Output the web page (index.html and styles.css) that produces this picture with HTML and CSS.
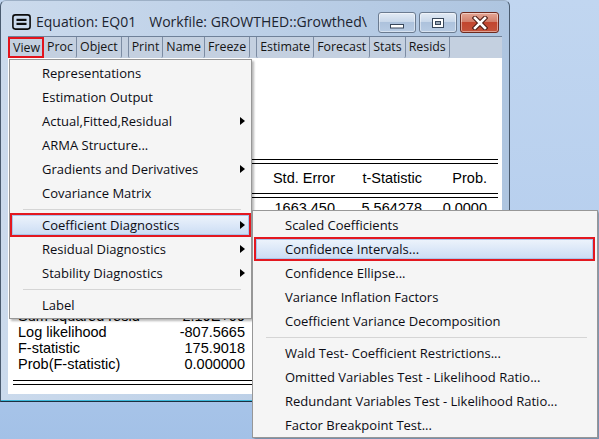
FILE: index.html
```html
<!DOCTYPE html>
<html>
<head>
<meta charset="utf-8">
<link rel="stylesheet" href="styles.css">
</head>
<body>
<div class="window">
  <div class="titlebar">
    <svg class="sysicon" width="19" height="16" viewBox="0 0 19 16">
      <rect x="0.9" y="0.9" width="17.2" height="14.2" rx="2.5" fill="none" stroke="#0d0d0d" stroke-width="1.6"/>
      <rect x="4.5" y="4.8" width="10" height="2.2" fill="#0d0d0d"/>
      <rect x="4.5" y="8.8" width="10" height="2.2" fill="#0d0d0d"/>
    </svg>
    <span class="title">Equation: EQ01</span>
    <span class="title wf">Workfile: GROWTHED::Growthed\</span>
    <div class="caption">
      <div class="cbtn">
        <svg width="16" height="6" viewBox="0 0 16 6"><rect x="1.5" y="1.5" width="13" height="3.5" fill="#fff" stroke="#38475a" stroke-width="1"/></svg>
      </div>
      <div class="cbtn">
        <svg width="14" height="12" viewBox="0 0 14 12"><rect x="1.5" y="1.5" width="11" height="9" fill="#fff" stroke="#38475a" stroke-width="1"/><rect x="4.5" y="4.5" width="5" height="3" fill="#9aa8b8" stroke="#38475a" stroke-width="1"/></svg>
      </div>
      <div class="cbtn close">
        <svg width="16" height="14" viewBox="0 0 16 14"><path d="M3 2 L13 12 M13 2 L3 12" stroke="#4a1a12" stroke-width="4.6" stroke-linecap="square"/><path d="M3 2 L13 12 M13 2 L3 12" stroke="#fff" stroke-width="2.6" stroke-linecap="square"/></svg>
      </div>
    </div>
  </div>
  <div class="toolbar">
    <div class="tgroup">
      <span class="tbtn sel">View</span><span class="tbtn">Proc</span><span class="tbtn">Object</span>
    </div>
    <div class="tgroup">
      <span class="tbtn">Print</span><span class="tbtn">Name</span><span class="tbtn">Freeze</span>
    </div>
    <div class="tgroup">
      <span class="tbtn">Estimate</span><span class="tbtn">Forecast</span><span class="tbtn">Stats</span><span class="tbtn">Resids</span>
    </div>
  </div>
  <div class="content">
    <div class="head">
      <div>Dependent Variable: Y</div>
      <div>Method: Least Squares</div>
      <div>Date: 06/12/14 &nbsp; Time: 10:45</div>
      <div>Sample: 1 50</div>
      <div>Included observations: 50</div>
    </div>
    <div class="dline"></div>
    <div class="coef hdr">
      <span class="l">Variable</span><span>Coefficient</span><span>Std. Error</span><span>t-Statistic</span><span>Prob.</span>
    </div>
    <div class="dline gap"></div>
    <div class="coef rows">
      <span class="l">C</span><span>9256.145</span><span>1663.450</span><span>5.564278</span><span>0.0000</span>
      <span class="l">X</span><span>1.782306</span><span>0.134380</span><span>13.26288</span><span>0.0000</span>
    </div>
    <div class="dline mid"></div>
    <div class="stats">
      <span>R-squared</span><span class="v">0.785606</span><span>Mean dependent var</span><span class="v">29456.02</span>
      <span>Adjusted R-squared</span><span class="v">0.781140</span><span>S.D. dependent var</span><span class="v">14463.48</span>
      <span>S.E. of regression</span><span class="v">6758.112</span><span>Akaike info criterion</span><span class="v">20.38266</span>
      <span>Sum squared resid</span><span class="v">2.19E+09</span><span>Schwarz criterion</span><span class="v">20.45914</span>
      <span>Log likelihood</span><span class="v">-807.5665</span><span>Hannan-Quinn criter.</span><span class="v">20.41135</span>
      <span>F-statistic</span><span class="v">175.9018</span><span>Durbin-Watson stat</span><span class="v">0.341273</span>
      <span>Prob(F-statistic)</span><span class="v">0.000000</span><span></span><span></span>
    </div>
    <div class="dline end"></div>
  </div>
</div>

<div class="menu main">
  <div class="item">Representations</div>
  <div class="item">Estimation Output</div>
  <div class="item">Actual,Fitted,Residual<span class="arrow"></span></div>
  <div class="item">ARMA Structure...</div>
  <div class="item">Gradients and Derivatives<span class="arrow"></span></div>
  <div class="item">Covariance Matrix</div>
  <div class="sep"></div>
  <div class="item hl">Coefficient Diagnostics<span class="arrow"></span></div>
  <div class="item">Residual Diagnostics<span class="arrow"></span></div>
  <div class="item">Stability Diagnostics<span class="arrow"></span></div>
  <div class="sep"></div>
  <div class="item">Label</div>
</div>

<div class="menu sub">
  <div class="item">Scaled Coefficients</div>
  <div class="item hl">Confidence Intervals...</div>
  <div class="item">Confidence Ellipse...</div>
  <div class="item">Variance Inflation Factors</div>
  <div class="item">Coefficient Variance Decomposition</div>
  <div class="sep"></div>
  <div class="item">Wald Test- Coefficient Restrictions...</div>
  <div class="item">Omitted Variables Test - Likelihood Ratio...</div>
  <div class="item">Redundant Variables Test - Likelihood Ratio...</div>
  <div class="item">Factor Breakpoint Test...</div>
</div>
</body>
</html>
```
FILE: styles.css
```css
* { box-sizing: border-box; }
html, body { margin: 0; padding: 0; }
body {
  width: 599px;
  height: 439px;
  overflow: hidden;
  position: relative;
  background: linear-gradient(180deg, #c1d6f0 0%, #b7cfee 55%, #a3c1e7 100%);
  font-family: "Open Sans", "Noto Sans", sans-serif;
}

/* window */
.window {
  width: 510px;
  height: 402px;
  border: 1px solid #4a5b6f;
  border-top-color: #9db0c6;
  border-bottom-color: #1d2f40;
  border-radius: 6px 6px 0 0;
  background: linear-gradient(90deg, #cbdaec 0%, #bed1e8 45%, #aec5e0 100%);
  box-shadow: inset 0 -1px 0 #3bb6d8;
  padding: 0 7px 7px 7px;
  display: flex;
  flex-direction: column;
}

.titlebar {
  height: 35px;
  display: flex;
  align-items: center;
  flex-shrink: 0;
}
.sysicon { margin-left: 4px; margin-top: 6px; flex-shrink: 0; }
.title {
  font-size: 14px;
  color: #1c2430;
  margin-left: 5px;
  margin-top: 5px;
  white-space: nowrap;
}
.title.wf { margin-left: 13px; }
.caption {
  margin-left: auto;
  margin-right: 3px;
  align-self: flex-start;
  margin-top: 11px;
  display: flex;
  gap: 3px;
}
.cbtn {
  width: 38px;
  height: 21px;
  border: 1px solid #6b7b90;
  border-radius: 3px;
  background: linear-gradient(180deg, #e3ebf5 0%, #c9d8ea 45%, #adc2dc 50%, #b7cbe3 100%);
  display: flex;
  align-items: center;
  justify-content: center;
  box-shadow: inset 0 0 0 1px rgba(255,255,255,0.45);
}
.cbtn:first-child svg { margin-top: 7px; }
.cbtn.close {
  width: 39px;
  border-color: #6d2a1e;
  background: linear-gradient(180deg, #e5a796 0%, #d2806c 45%, #c2462f 50%, #c4533b 100%);
}

/* toolbar */
.toolbar {
  height: 22px;
  border-top: 1px solid #6f8199;
  background: #c4d0e0;
  display: flex;
  gap: 6px;
  flex-shrink: 0;
  font-size: 12.4px;
  color: #151515;
}
.tgroup { display: flex; }
.tbtn {
  height: 21px;
  line-height: 20px;
  padding: 0 3px;
  border-right: 1px solid #7c8ca3;
  border-radius: 0 0 2px 2px;
  white-space: nowrap;
}
.tgroup .tbtn:first-child { border-left: 1px solid #7c8ca3; }
.tbtn.sel {
  border: 2px solid #e2141c;
  padding: 0 2px 0 3px;
  line-height: 17px;
  border-radius: 0;
}
.tgroup .tbtn.sel:first-child { border-left: 2px solid #e2141c; }

/* content */
.content {
  flex: 1;
  background: #fff;
  font-family: "Liberation Sans", Arial, sans-serif;
  font-size: 14.5px;
  color: #000;
  line-height: 16px;
  white-space: nowrap;
  overflow: hidden;
}
.head { padding: 8px 0 0 10px; height: 101px; }
.dline {
  height: 5px;
  border-top: 1px solid #000;
  border-bottom: 1px solid #000;
  margin: 0 4px 0 5px;
}
.dline.gap { margin-top: 7px; }
.coef.hdr { margin-top: 6px; }
.coef {
  display: grid;
  grid-template-columns: 1fr 90px 87px 87px 65px;
  padding: 0 15px 0 10px;
  text-align: right;
}
.coef.rows { margin-top: 2px; }
.coef .l { text-align: left; }
.dline.mid { margin-top: 8px; margin-bottom: 15px; }
.stats {
  display: grid;
  grid-template-columns: 130px 97px 1fr 70px;
  grid-auto-rows: 16px;
  padding: 0 15px 0 10px;
}
.stats span:nth-child(4n+3) { padding-left: 14px; overflow: hidden; }
.stats .v { text-align: right; }
.dline.end { margin-top: 8px; }

/* menus */
.menu {
  position: absolute;
  background: #f5f5f5;
  border: 1px solid #979797;
  box-shadow: 2px 2px 2px rgba(0,0,0,0.28);
  font-size: 13px;
  color: #0c0c14;
}
.menu.main { left: 9px; top: 59px; width: 243px; padding: 1px 0; }
.menu.sub { left: 252px; top: 210px; width: 346px; padding: 2px 0 0 0; }
.item {
  height: 24px;
  display: flex;
  align-items: center;
  padding: 0 6px 0 32px;
  white-space: nowrap;
}
.item.hl {
  background: linear-gradient(180deg, #f1f6fd 0%, #dce8f8 50%, #c7daf3 100%);
  box-shadow: inset 0 0 0 2px #e31820, inset 0 0 0 3px #a9c4ea;
}
.menu.sub .item.hl { margin-right: 2px; margin-left: 1px; padding-left: 31px; }
.arrow {
  margin-left: auto;
  width: 0;
  height: 0;
  border-left: 5px solid #000;
  border-top: 4.5px solid transparent;
  border-bottom: 4.5px solid transparent;
}
.sep {
  height: 8px;
  display: flex;
  align-items: center;
  padding: 0 10px 0 13px;
}
.sep::before {
  content: "";
  flex: 1;
  height: 1px;
  background: #d5d5d5;
}
```
